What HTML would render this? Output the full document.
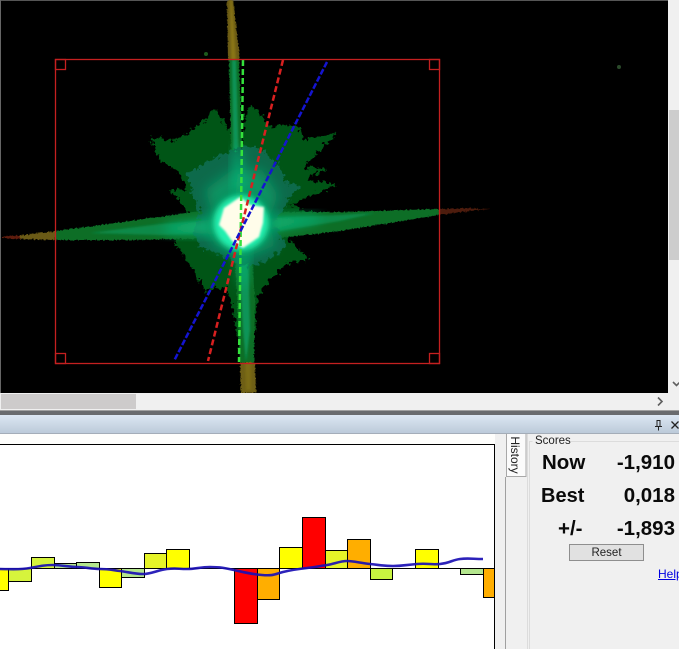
<!DOCTYPE html>
<html><head><meta charset="utf-8"><style>
html,body{margin:0;padding:0;background:#f0f0f0}
body{width:679px;height:649px;position:relative;overflow:hidden;font-family:"Liberation Sans",sans-serif}
.a{position:absolute}
.l{position:absolute;font-weight:bold;font-size:20.500px;line-height:24px;color:#0a0a0a;white-space:nowrap}
</style></head><body>
<svg class="a" style="left:0;top:0" width="679" height="649" viewBox="0 0 679 649">
<defs>
<filter id="b1" x="-30%" y="-30%" width="160%" height="160%"><feGaussianBlur stdDeviation="1"/></filter>
<filter id="b3" x="-30%" y="-30%" width="160%" height="160%"><feGaussianBlur stdDeviation="3"/></filter>
<filter id="b6" x="-40%" y="-40%" width="180%" height="180%"><feGaussianBlur stdDeviation="6"/></filter>
<filter id="j" x="-10%" y="-10%" width="120%" height="120%"><feTurbulence type="fractalNoise" baseFrequency="0.22" numOctaves="3" seed="4" result="n"/><feDisplacementMap in="SourceGraphic" in2="n" scale="11" xChannelSelector="R" yChannelSelector="G"/></filter>
<filter id="j2" x="-10%" y="-30%" width="120%" height="160%"><feTurbulence type="fractalNoise" baseFrequency="0.5" numOctaves="2" seed="7" result="n"/><feDisplacementMap in="SourceGraphic" in2="n" scale="3" xChannelSelector="R" yChannelSelector="G"/></filter>
<radialGradient id="glow" cx="50%" cy="50%" r="50%"><stop offset="0" stop-color="#40ffd0"/><stop offset=".45" stop-color="#10d888"/><stop offset=".75" stop-color="#0a9a62" stop-opacity=".6"/><stop offset="1" stop-color="#0a7a48" stop-opacity="0"/></radialGradient>
<linearGradient id="tb" x1="0" y1="0" x2="0" y2="1"><stop offset="0" stop-color="#dce7f3"/><stop offset="1" stop-color="#bccad9"/></linearGradient>
<clipPath id="inr"><rect x="56" y="60" width="383" height="303"/></clipPath>
<clipPath id="chart"><rect x="0" y="445" width="494" height="204"/></clipPath>
</defs>
<rect x="0" y="0" width="668" height="393" fill="#000"/>
<rect x="0" y="0" width="668" height="1" fill="#555"/>
<rect x="0" y="0" width="1" height="393" fill="#666"/>

<!-- outer olive streaks -->
<g filter="url(#j2)">
<polygon points="227,0 233,0 240,60 228,60" fill="#6a5a12"/>
<polygon points="240,362 255,362 256,393 241,393" fill="#6e5e14"/>
<polygon points="20,235.500 55,231 55,240 20,239" fill="#6a5a12"/>
<polygon points="2,236.500 20,235.500 20,239 2,238" fill="#5e1a10"/>
<polygon points="439,209 470,208 490,209 470,211 439,215" fill="#4e1a0c"/>
</g>
<polygon points="230,0 232,0 236,60 231,60" fill="#8a7618" filter="url(#b1)"/>
<polygon points="245,362 251,362 251,390 246,390" fill="#7c6c14" filter="url(#b1)"/>

<g clip-path="url(#inr)">
<!-- dark green star -->
<polygon fill="#055412" filter="url(#j)" points="150,137 176,141 190,131 205,120 215,108 225,125 233,132 242,150 246,110 252,106 263,117 270,127 297,123 303,140 337,133 317,153 303,167 325,168 307,180 337,185 307,197 290,205 330,218 300,234 283,233 297,247 310,260 287,263 270,280 258,297 254,330 247,362 240,362 235,320 227,287 205,290 193,270 173,240 197,227 203,217 187,213 170,190 187,190 180,173 160,160"/>
<!-- horizontal streak -->
<polygon fill="#0a6e26" filter="url(#j2)" points="55,231 130,221 200,211 240,212 240,238 130,240 55,240"/>
<polygon fill="#0d8a4a" filter="url(#b1)" points="90,233 160,224 240,218 240,233 160,235"/>
<polygon fill="#0a6e26" filter="url(#j2)" points="240,212 340,212 439,209 439,215 340,231 280,238 240,238"/>
<polygon fill="#0d8a4a" filter="url(#b1)" points="240,219 340,215 375,213 340,221 280,231 240,233"/>
<!-- vertical streak -->
<polygon fill="#0a6e26" filter="url(#j2)" points="229,60 239,60 244,200 250,230 255,300 254,362 240,362 234,240 232,200"/>
<polygon fill="#0e9458" filter="url(#b1)" points="232,60 236,60 240,200 248,240 250,330 246,362 243,330 238,240 234,200"/>
<!-- teal layer -->
<polygon fill="#0a6a4c" filter="url(#j)" points="187,173 217,157 240,147 257,147 270,157 280,167 287,183 300,185 287,203 273,223 287,247 263,263 243,267 227,257 200,247 193,233 200,213 193,197"/>
<polygon fill="#0a9464" filter="url(#b6)" points="205,190 232,170 262,170 278,195 268,222 276,245 245,258 215,245 205,228 212,210"/>
<!-- rays -->
<polygon fill="#10b878" filter="url(#b6)" points="165,226 215,219 270,218 320,216 320,220 270,230 215,234 165,232"/>
<polygon fill="#10b878" filter="url(#b6)" points="234,150 240,150 248,220 246,285 241,285 236,220"/>
<circle cx="241" cy="223" r="38" fill="url(#glow)" filter="url(#b3)"/>
<circle cx="241" cy="223" r="27" fill="#20f0b0" filter="url(#b3)"/>
</g>
<!-- white blob -->
<polygon fill="#fffdea" filter="url(#b1)" points="240,197 250,205 264,207 263,223 259,237 243,248 232,241 225,231 219,225 224,208"/>

<!-- dashed lines -->
<line x1="243" y1="60" x2="239" y2="362" stroke="#34e23c" stroke-width="2.500" stroke-dasharray="6 3"/>
<line x1="283" y1="60" x2="208" y2="361" stroke="#d82020" stroke-width="2.500" stroke-dasharray="6 3"/>
<line x1="327" y1="62" x2="174" y2="361" stroke="#1414d0" stroke-width="2.500" stroke-dasharray="6 2"/>

<!-- ROI -->
<g fill="none" stroke="#c42020" stroke-width="1.300">
<rect x="55.500" y="59.500" width="384" height="304"/>
<rect x="55.500" y="59.500" width="10" height="10"/>
<rect x="429.500" y="59.500" width="10" height="10"/>
<rect x="55.500" y="353.500" width="10" height="10"/>
<rect x="429.500" y="353.500" width="10" height="10"/>
</g>
<!-- specks -->
<circle cx="206" cy="54" r="2" fill="#1c5a1c"/>
<circle cx="619" cy="67" r="2" fill="#2a4a2a"/>

<!-- right scrollbar -->
<rect x="668" y="0" width="11" height="393" fill="#f0f0f0"/>
<rect x="669" y="110" width="10" height="150" fill="#cdcdcd"/>
<path d="M673 382l3.500 3.500 3.500-3.500" fill="none" stroke="#606060" stroke-width="1.600"/>
<!-- bottom scrollbar -->
<rect x="0" y="393" width="679" height="17" fill="#f0f0f0"/>
<rect x="1" y="394" width="135" height="15" fill="#cdcbcb"/>
<path d="M658 397.500l4 4-4 4" fill="none" stroke="#606060" stroke-width="1.600"/>
<!-- divider and title bar -->
<rect x="0" y="410" width="679" height="1" fill="#a0a0a0"/>
<rect x="0" y="411" width="679" height="4" fill="#696b6e"/>
<rect x="0" y="415" width="679" height="18" fill="url(#tb)"/>
<rect x="0" y="433" width="679" height="1" fill="#a4adb8"/>
<path d="M656.500 420.500h4M657 420.500v6M660 420.500v6M655 426.500h7M658.500 426.500v4" fill="none" stroke="#222" stroke-width="1"/>
<path d="M671.500 421.500l7 7M678.500 421.500l-7 7" fill="none" stroke="#222" stroke-width="1.300"/>

<!-- chart region -->
<rect x="0" y="434" width="505" height="215" fill="#fefefc"/>
<rect x="0" y="445" width="494" height="204" fill="#fff"/>
<rect x="0" y="444" width="495" height="1" fill="#000"/>
<rect x="494" y="444" width="1" height="205" fill="#000"/>
<rect x="495" y="434" width="11" height="215" fill="#f0f0f0"/>
<g clip-path="url(#chart)" stroke="#000" stroke-width="1">
<line x1="0" y1="568.500" x2="494" y2="568.500"/>
<rect x="-3.500" y="568.500" width="12" height="22" fill="#ffff00"/>
<rect x="8.500" y="568.500" width="23" height="13" fill="#d6f43c"/>
<rect x="31.500" y="557.500" width="23" height="11" fill="#d6f43c"/>
<rect x="54.500" y="563.500" width="22" height="5" fill="#b4e68e"/>
<rect x="76.500" y="562.500" width="23" height="6" fill="#b4e68e"/>
<rect x="99.500" y="568.500" width="22" height="19" fill="#ffff00"/>
<rect x="121.500" y="568.500" width="23" height="9" fill="#b4e68e"/>
<rect x="144.500" y="553.500" width="22" height="15" fill="#e6f428"/>
<rect x="166.500" y="549.500" width="23" height="19" fill="#ffff00"/>
<rect x="234.500" y="568.500" width="23" height="55" fill="#ff0000"/>
<rect x="257.500" y="568.500" width="22" height="31" fill="#ffae00"/>
<rect x="279.500" y="547.500" width="23" height="21" fill="#ffff00"/>
<rect x="302.500" y="517.500" width="23" height="51" fill="#ff0000"/>
<rect x="325.500" y="550.500" width="22" height="18" fill="#e6f428"/>
<rect x="347.500" y="539.500" width="23" height="29" fill="#ffae00"/>
<rect x="370.500" y="568.500" width="22" height="11" fill="#c8f440"/>
<rect x="415.500" y="549.500" width="23" height="19" fill="#ffff00"/>
<rect x="460.500" y="568.500" width="23" height="6" fill="#b4e68e"/>
<rect x="483.500" y="568.500" width="23" height="29" fill="#ffae00"/>
</g>
<path d="M0 569C10 569 20 570 30 568S45 565 53 565 70 567 77 567 92 569 100 569 112 570 120 571 135 574 143 574 158 570 167 569 178 569 187 569 200 567 210 567 225 568 234 570 250 574 262 575 275 574 283 572 298 569 307 568 320 566 327 565 340 561 347 561 360 563 370 564 383 566 393 566 405 565 417 564 430 565 440 564 452 560 460 559 473 559 483 559" fill="none" stroke="#1a0fb4" stroke-width="2.600" opacity=".92"/>

<!-- tab strip -->
<rect x="505" y="477" width="1" height="172" fill="#a0a0a0"/>
<rect x="506" y="477" width="21" height="172" fill="#f0f0f0"/>
<rect x="527" y="434" width="1" height="215" fill="#dcdcdc"/>
<rect x="507" y="434" width="19" height="42" fill="#fbfbfb"/>
<path d="M506.500 434v42.500h19.500V434" fill="none" stroke="#a8a8a8" stroke-width="1"/>
<!-- group box -->
<path d="M529.500 649V441.500h3M571 441.500H679" fill="none" stroke="#dcdcdc" stroke-width="1"/>
<!-- reset -->
<rect x="569.500" y="544.500" width="74" height="16" fill="#e1e1e1" stroke="#8e8e8e" stroke-width="1"/>
</svg>

<div class="a" style="left:515px;top:455px;width:0;height:0"><div style="position:absolute;left:-22px;top:-7px;width:44px;height:14px;line-height:14px;font-size:12px;color:#222;text-align:center;transform:rotate(90deg);white-space:nowrap">History</div></div>
<div class="a" style="left:535px;top:434px;font-size:11.500px;line-height:14px;color:#222">Scores</div>
<div class="l" style="left:542px;top:451px">Now</div>
<div class="l" style="right:4px;top:451px">-1,910</div>
<div class="l" style="left:541px;top:484px;font-size:20px">Best</div>
<div class="l" style="right:4px;top:484px">0,018</div>
<div class="l" style="left:558px;top:517px">+/-</div>
<div class="l" style="right:4px;top:517px">-1,893</div>
<div class="a" style="left:569px;top:545px;width:75px;height:17px;line-height:17px;text-align:center;font-size:11.500px;color:#222">Reset</div>
<div class="a" style="left:658px;top:567px;font-size:12px;line-height:14px;color:#0000e0;text-decoration:underline">Help</div>
</body></html>
